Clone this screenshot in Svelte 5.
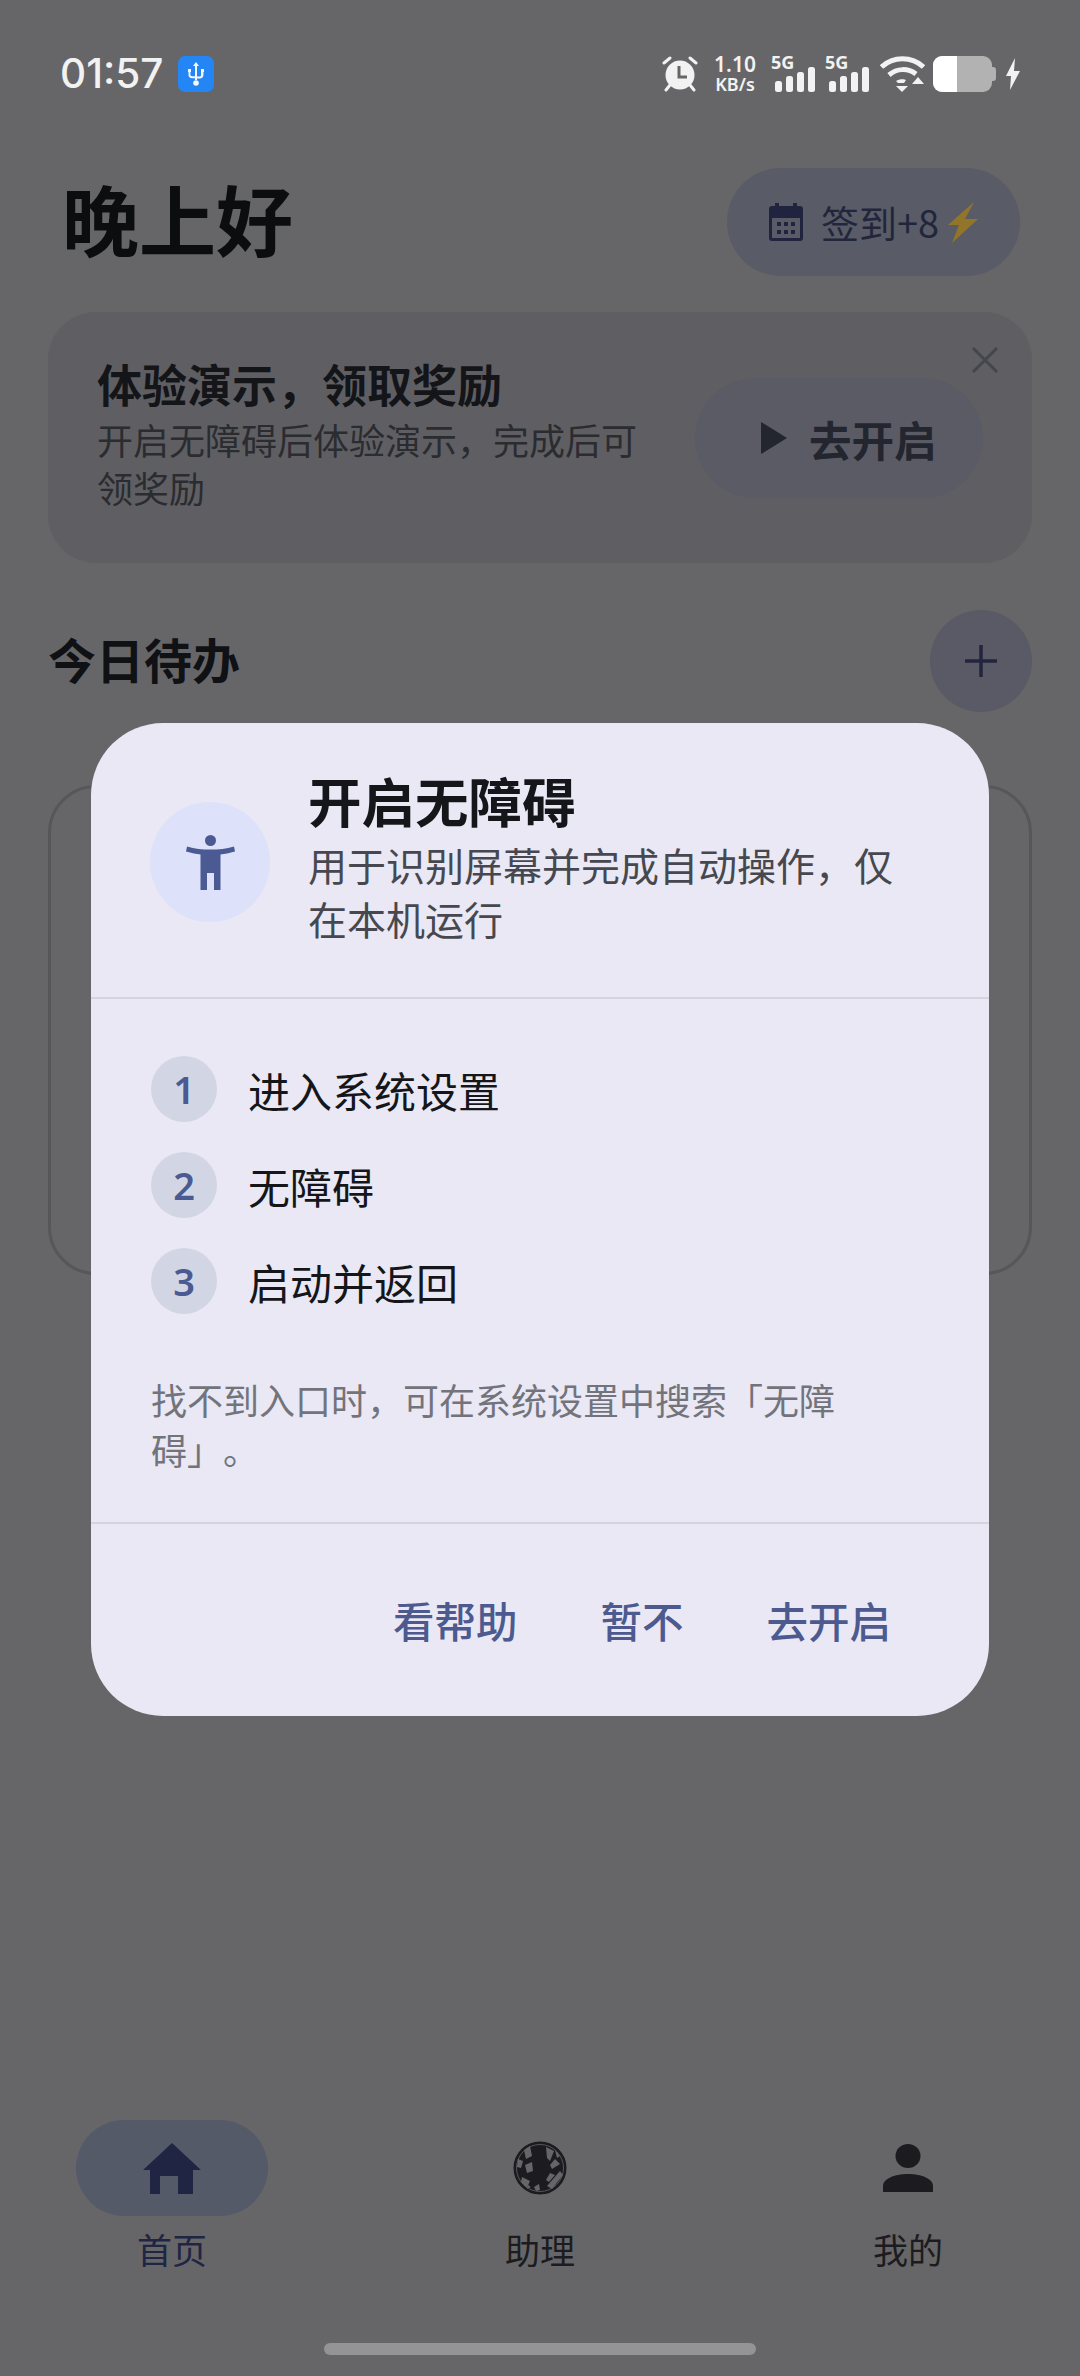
<script>
  const stepLabels = ['进入系统设置', '无障碍', '启动并返回'];
</script>

<div class="page">
  <div class="status">
    <span class="time">01:57</span>
    <span class="usb">
      <svg viewBox="0 0 36 36" width="36" height="36">
        <g fill="#f4f8ff">
          <path d="M18 6l3 4h-2v14h-2V10h-2z" />
          <path d="M10 13h3v3h-.6v2.500c0 1 .8 1.700 1.700 1.700H17v2h-3c-2 0-3.500-1.500-3.500-3.500V16H10z" />
          <path d="M23 13h3v3h-.6v3c0 2-1.500 3.500-3.500 3.500H19v-2h3c.6 0 1-.5 1-1.200V16z" />
          <circle cx="18" cy="27" r="2.800" />
        </g>
      </svg>
    </span>
    <div class="status-right">
      <svg class="alarm" viewBox="0 0 36 37" width="36" height="37">
        <g fill="none" stroke="#f2f2f2" stroke-width="3" stroke-linecap="round">
          <path d="M2 8l6-5M34 8l-6-5M8 30l-4 5M28 30l4 5" />
        </g>
        <circle cx="18" cy="20" r="14.500" fill="#f2f2f2" />
        <path d="M17 11v11h8" fill="none" stroke="#666668" stroke-width="3" />
      </svg>
      <div class="speed"><span>1.10</span><span>KB/s</span></div>
      <div class="sig">
        <span class="five">5G</span>
        <svg viewBox="0 0 42 25" width="42" height="25">
          <g fill="#f2f2f2">
            <rect x="2" y="14" width="7" height="11" rx="2.500" />
            <rect x="13" y="9" width="7" height="16" rx="2.500" />
            <rect x="24" y="5" width="7" height="20" rx="2.500" />
            <rect x="35" y="0" width="7" height="25" rx="2.500" />
          </g>
        </svg>
      </div>
      <div class="sig">
        <span class="five">5G</span>
        <svg viewBox="0 0 42 25" width="42" height="25">
          <g fill="#f2f2f2">
            <rect x="2" y="14" width="7" height="11" rx="2.500" />
            <rect x="13" y="9" width="7" height="16" rx="2.500" />
            <rect x="24" y="5" width="7" height="20" rx="2.500" />
            <rect x="35" y="0" width="7" height="25" rx="2.500" />
          </g>
        </svg>
      </div>
      <svg class="wifi" viewBox="0 0 45 36" width="45" height="36">
        <g fill="none" stroke="#f2f2f2" stroke-width="5">
          <path d="M1.500 11C13 0 32 0 43.500 11" />
          <path d="M9 19c8-7 19-7 27-1" />
        </g>
        <path d="M16 30h12l-6 6z" fill="#f2f2f2" />
        <path d="M16 25c3-2 8-2 10-1l-2 3h-6z" fill="#f2f2f2" />
        <path d="M38 21l6 7H32z" fill="#f2f2f2" />
      </svg>
      <div class="battery">
        <span class="level"></span>
      </div>
      <svg class="bolt" viewBox="0 0 14 32" width="14" height="32">
        <path d="M9 0L0 18h5l-1 14 10-19H8z" fill="#f2f2f2" />
      </svg>
    </div>
  </div>

  <header class="top">
    <h1>晚上好</h1>
    <div class="checkin">
      <svg viewBox="0 0 34 38" width="34" height="38">
        <path d="M3 3h28a3 3 0 0 1 3 3v29a3 3 0 0 1-3 3H3a3 3 0 0 1-3-3V6a3 3 0 0 1 3-3z" fill="#20243f" />
        <rect x="6" y="0" width="4" height="6" fill="#20243f" />
        <rect x="24" y="0" width="4" height="6" fill="#20243f" />
        <rect x="3" y="15" width="28" height="20" fill="#595b66" />
        <g fill="#20243f">
          <rect x="8" y="19" width="4" height="4" /><rect x="15" y="19" width="4" height="4" /><rect x="22" y="19" width="4" height="4" />
          <rect x="8" y="27" width="4" height="4" /><rect x="15" y="27" width="4" height="4" /><rect x="22" y="27" width="4" height="4" />
        </g>
      </svg>
      <span class="checkin-text">签到+8</span>
      <svg class="spark" viewBox="0 0 31 41" width="31" height="41">
        <path d="M27 0L1 23h11L5 41l26-24H18z" fill="#93752a" />
      </svg>
    </div>
  </header>

  <section class="banner">
    <svg class="close" viewBox="0 0 28 28" width="28" height="28">
      <path d="M2 2l24 24M26 2L2 26" stroke="#45464b" stroke-width="3" fill="none" />
    </svg>
    <div class="banner-text">
      <h2>体验演示，领取奖励</h2>
      <p>开启无障碍后体验演示，完成后可领奖励</p>
    </div>
    <div class="go">
      <svg viewBox="0 0 26 32" width="26" height="32"><path d="M0 0l26 16L0 32z" fill="#23252f" /></svg>
      <span>去开启</span>
    </div>
  </section>

  <div class="todo-head">
    <h3>今日待办</h3>
    <div class="plus">
      <svg viewBox="0 0 32 32" width="32" height="32">
        <path d="M16 0v32M0 16h32" stroke="#22263c" stroke-width="3.500" fill="none" />
      </svg>
    </div>
  </div>
  <div class="todo-card"></div>

  <nav class="tabs">
    <div class="tab active">
      <div class="pill">
        <svg viewBox="0 0 58 51" width="58" height="51">
          <path d="M29 0L0 27h7v24h10V33h18v18h15V27h8z" fill="#1f2543" />
        </svg>
      </div>
      <span>首页</span>
    </div>
    <div class="tab">
      <div class="pill">
        <svg viewBox="0 0 54 54" width="54" height="54">
          <circle cx="27" cy="27" r="25.500" fill="#1c1c20" stroke="#1c1c20" stroke-width="2" />
          <circle cx="27" cy="27" r="23.500" fill="none" stroke="#55555a" stroke-width="1" />
          <g fill="#66666a">
            <path d="M11 9l6-4 2 10-6 3z" />
            <path d="M33 6l8 4-4 10-3-3z" />
            <path d="M5 18l5 2-2 7-4-1z" />
            <path d="M12 24l7-3 1 9-6 2z" />
            <path d="M9 36l8 4-3 7-6-6z" />
            <path d="M42 18l5 5-8 5-2-4z" />
            <path d="M47 30l3 4-11 14-5-3z" />
            <path d="M37 32l5 2-6 7-3-2z" />
            <path d="M21 46l5-3 1 6-4 1z" />
            <path d="M18 46l-4 2 1-4z" />
            <path d="M42 9l5 6-3 2z" />
          </g>
        </svg>
      </div>
      <span>助理</span>
    </div>
    <div class="tab">
      <div class="pill">
        <svg viewBox="0 0 50 48" width="50" height="48">
          <ellipse cx="25" cy="12" rx="12.500" ry="12" fill="#1c1c20" />
          <path d="M0 48v-6c0-7 11-12 25-12s25 5 25 12v6z" fill="#1c1c20" />
        </svg>
      </div>
      <span>我的</span>
    </div>
  </nav>
  <div class="home-bar"></div>

  <div class="modal">
    <div class="modal-head">
      <div class="acc-icon">
        <svg viewBox="0 0 49 55" width="49" height="55">
          <circle cx="24.500" cy="5.500" r="5.500" fill="#4b5a92" />
          <path d="M1 11.500C9 14 16 14.500 24.500 14.500s15.500-.5 23.500-3l1 5c-5.500 1.500-10.500 2.500-14.500 3V55H28V38h-7v17h-6.500V19.500C10.500 19 5.500 18 0 16.500z" fill="#4b5a92" />
        </svg>
      </div>
      <div class="modal-title">
        <h2>开启无障碍</h2>
        <p>用于识别屏幕并完成自动操作，仅在本机运行</p>
      </div>
    </div>

    <div class="modal-body">
      <ol>
        {#each stepLabels as label, i}
          <li>
            <span class="num">{i + 1}</span>
            <span>{label}</span>
          </li>
        {/each}
      </ol>
      <p class="hint">找不到入口时，可在系统设置中搜索「无障碍」。</p>
    </div>

    <div class="actions">
      <span>看帮助</span>
      <span>暂不</span>
      <span>去开启</span>
    </div>
  </div>
</div>

<style>
  :global(body) {
    margin: 0;
    background: #666668;
  }

  .page {
    position: relative;
    display: flex;
    flex-direction: column;
    width: 1080px;
    height: 2376px;
    overflow: hidden;
    background: #666668;
    font-family: "Noto Sans CJK SC", "Noto Sans", sans-serif;
    color: #101114;
    text-spacing-trim: space-all;
  }

  h1, h2, h3, p, ol {
    margin: 0;
    padding: 0;
  }

  .status {
    display: flex;
    align-items: center;
    height: 37px;
    padding: 55px 60px 0;
    color: #f2f2f2;
  }

  .time {
    font-family: Inter, Roboto, sans-serif;
    font-size: 40.500px;
    font-weight: 500;
    letter-spacing: 0;
  }

  .usb {
    display: flex;
    width: 36px;
    height: 36px;
    margin-left: 15px;
    background: #2485f4;
    border-radius: 7px;
  }

  .status-right {
    display: flex;
    align-items: center;
    margin-left: auto;
  }

  .speed {
    display: flex;
    flex-direction: column;
    align-items: center;
    width: 40px;
    margin-left: 17px;
    font-family: "Noto Sans", sans-serif;
    font-weight: 600;
    line-height: 20px;
  }

  .speed span:first-child {
    font-size: 21px;
  }

  .speed span:last-child {
    font-size: 18px;
    white-space: nowrap;
  }

  .sig {
    position: relative;
    width: 42px;
    height: 37px;
    margin-left: 18px;
    display: flex;
    align-items: flex-end;
  }

  .sig + .sig {
    margin-left: 12px;
  }

  .five {
    position: absolute;
    left: -2px;
    top: -3px;
    font-family: "Noto Sans", sans-serif;
    font-size: 18px;
    font-weight: 700;
    line-height: 20px;
  }

  .wifi {
    margin-left: 11px;
  }

  .battery {
    position: relative;
    width: 59px;
    height: 36px;
    margin-left: 8px;
    background: #b2b2b3;
    border-radius: 9px;
  }

  .battery::after {
    content: "";
    position: absolute;
    right: -4px;
    top: 11px;
    width: 4px;
    height: 14px;
    background: #b2b2b3;
    border-radius: 0 3px 3px 0;
  }

  .level {
    display: block;
    width: 24px;
    height: 36px;
    background: #fff;
    border-radius: 9px 0 0 9px;
  }

  .bolt {
    margin-left: 14px;
  }

  .top {
    display: flex;
    align-items: center;
    justify-content: space-between;
    height: 108px;
    padding: 76px 60px 0 62px;
  }

  h1 {
    font-size: 77px;
    font-weight: 700;
    line-height: 108px;
    color: #0c0d0f;
    position: relative;
    top: -4px;
  }

  .checkin {
    display: flex;
    align-items: center;
    width: 293px;
    height: 108px;
    box-sizing: border-box;
    padding-left: 42px;
    background: #595b66;
    border-radius: 54px;
  }

  .checkin-text {
    margin-left: 18px;
    font-size: 38px;
    line-height: 44px;
    color: #22263c;
    white-space: nowrap;
  }

  .spark {
    margin-left: 8px;
  }

  .banner {
    position: relative;
    display: flex;
    height: 251px;
    margin: 36px 48px 0;
    padding: 0 49px;
    background: #5f5f63;
    border-radius: 48px;
  }

  .close {
    position: absolute;
    top: 34px;
    right: 33px;
  }

  .banner-text {
    width: 550px;
    padding-top: 42px;
  }

  .banner-text h2 {
    font-size: 45px;
    font-weight: 700;
    line-height: 60px;
    color: #141519;
  }

  .banner-text p {
    width: 540px;
    margin-top: 2px;
    font-size: 36px;
    line-height: 47.500px;
    color: #2b2c30;
  }

  .go {
    display: flex;
    align-items: center;
    gap: 22px;
    position: absolute;
    left: 647px;
    top: 66px;
    width: 288px;
    height: 120px;
    box-sizing: border-box;
    padding-left: 66px;
    background: #5a5b65;
    border-radius: 60px;
    font-size: 42.500px;
    font-weight: 700;
    color: #23252f;
  }

  .todo-head {
    display: flex;
    align-items: center;
    justify-content: space-between;
    height: 102px;
    margin: 47px 48px 0;
  }

  h3 {
    font-size: 48px;
    font-weight: 700;
    color: #101114;
    position: relative;
    top: -3px;
  }

  .plus {
    display: flex;
    align-items: center;
    justify-content: center;
    width: 102px;
    height: 102px;
    background: #595a65;
    border-radius: 50%;
  }

  .todo-card {
    height: 484px;
    margin: 73px 48px 0;
    border: 3px solid #57575a;
    border-radius: 48px;
  }

  .tabs {
    display: flex;
    justify-content: space-between;
    margin-top: auto;
    padding: 0 76px;
  }

  .tab {
    display: flex;
    flex-direction: column;
    align-items: center;
    width: 192px;
    font-size: 35px;
    color: #1c1c20;
  }

  .tab span {
    margin-top: 9px;
    line-height: 48px;
  }

  .pill {
    display: flex;
    align-items: center;
    justify-content: center;
    width: 192px;
    height: 96px;
    border-radius: 48px;
  }

  .active {
    color: #1f2543;
  }

  .active .pill {
    background: #555a68;
  }

  .home-bar {
    align-self: center;
    width: 432px;
    height: 12px;
    margin: 70px 0 21px;
    background: #949496;
    border-radius: 6px;
  }

  .modal {
    position: absolute;
    left: 91px;
    top: 723px;
    width: 898px;
    height: 993px;
    background: #e9e8f4;
    border-radius: 72px;
    display: flex;
    flex-direction: column;
  }

  .modal-head {
    display: flex;
    gap: 38px;
    height: 276px;
    box-sizing: border-box;
    padding: 41px 60px 0 59px;
    border-bottom: 2px solid #d4d4de;
  }

  .acc-icon {
    display: flex;
    align-items: center;
    justify-content: center;
    flex: none;
    width: 120px;
    height: 120px;
    margin-top: 38px;
    background: #dde2fa;
    border-radius: 50%;
  }

  .modal-title h2 {
    font-size: 53.500px;
    font-weight: 700;
    line-height: 72px;
    color: #15161a;
  }

  .modal-title p {
    margin-top: 1px;
    font-size: 39px;
    line-height: 54px;
    color: #47484f;
  }

  .modal-body {
    height: 525px;
    box-sizing: border-box;
    padding: 57px 60px 0 60px;
    border-bottom: 2px solid #d4d4de;
  }

  ol {
    list-style: none;
    display: flex;
    flex-direction: column;
    gap: 30px;
  }

  li {
    display: flex;
    align-items: center;
    gap: 31px;
    height: 66px;
    font-size: 42px;
    color: #15161a;
  }

  .num {
    display: flex;
    align-items: center;
    justify-content: center;
    width: 66px;
    height: 66px;
    background: #d2d6e4;
    border-radius: 50%;
    font-family: "Noto Sans", sans-serif;
    font-size: 38px;
    font-weight: 600;
    color: #4b5a92;
  }

  .hint {
    width: 700px;
    margin-top: 60px;
    font-size: 36px;
    line-height: 50px;
    color: #73747b;
  }

  .actions {
    display: flex;
    justify-content: flex-end;
    gap: 83px;
    padding: 60px 98px 0 0;
    font-size: 41.500px;
    font-weight: 500;
    line-height: 72px;
    color: #4d5a8f;
  }
</style>
